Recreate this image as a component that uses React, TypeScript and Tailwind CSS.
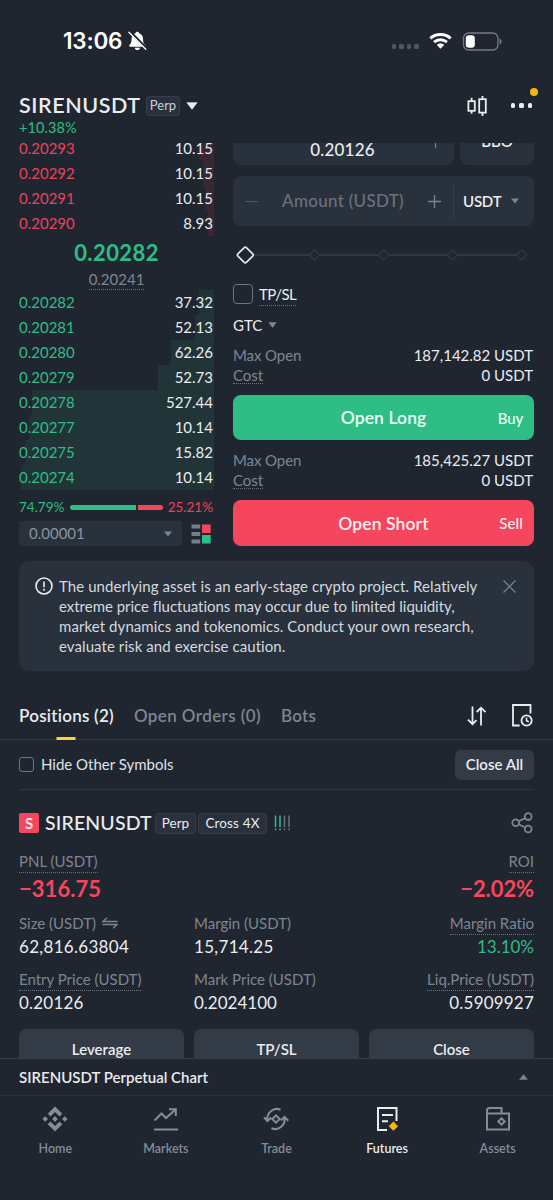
import type { ReactNode } from 'react'

const asks = [
    { price: '0.20293', amount: '10.15', depth: 15 },
    { price: '0.20292', amount: '10.15', depth: 11 },
    { price: '0.20291', amount: '10.15', depth: 9 },
    { price: '0.20290', amount: '8.93', depth: 6 },
]

const bids = [
    { price: '0.20282', amount: '37.32', depth: 15 },
    { price: '0.20281', amount: '52.13', depth: 19 },
    { price: '0.20280', amount: '62.26', depth: 43 },
    { price: '0.20279', amount: '52.73', depth: 56 },
    { price: '0.20278', amount: '527.44', depth: 182 },
    { price: '0.20277', amount: '10.14', depth: 185 },
    { price: '0.20275', amount: '15.82', depth: 189 },
    { price: '0.20274', amount: '10.14', depth: 193 },
]

function Caret({ className = '', up = false }: { className?: string; up?: boolean }) {
    return (
        <svg className={className} viewBox="0 0 10 7" fill="currentColor">
            <path d={up ? 'M5 0.6 9.6 6.4H0.4Z' : 'M0.6 0.6H9.4L5 6.4Z'} stroke="currentColor" strokeWidth="0.6" strokeLinejoin="round" />
        </svg>
    )
}

function Dotted({ children, className = '' }: { children: ReactNode; className?: string }) {
    return <span className={`border-b border-dotted border-[#6b7382] ${className}`}>{children}</span>
}

function BookRow({ row, side }: { row: { price: string; amount: string; depth: number }; side: 'ask' | 'bid' }) {
    return (
        <div className="relative flex h-[25px] items-center justify-between pr-px text-[15px]">
            <div
                className={`absolute inset-y-0 right-0 ${side === 'ask' ? 'bg-[#3a2733]' : 'bg-[#213538]'}`}
                style={{ width: row.depth }}
            />
            <span className={`relative ${side === 'ask' ? 'text-[#e8435b]' : 'text-[#2ebd85]'}`}>{row.price}</span>
            <span className="relative text-[#eaecef]">{row.amount}</span>
        </div>
    )
}

function StatusBar() {
    return (
        <div className="flex h-[82px] items-center justify-between pl-[63px] pr-[51px]">
            <div className="flex items-center gap-[6px]">
                <span className="font-['Inter',sans-serif] text-[22.5px] font-semibold leading-none tracking-[-0.2px] text-white">13:06</span>
                <svg className="h-[20px] w-[19px]" viewBox="0 0 19 20" fill="#fff">
                    <path d="M9.3 0.8c.9 0 1.6.6 1.7 1.4 2.6.7 4 2.8 4 5.6 0 4.2 1.2 5.2 2.2 6.3.6.7.2 1.700-.7 1.700H2.200c-1 0-1.400-1-.8-1.700 1-1.100 2.200-2.100 2.200-6.300 0-2.800 1.400-4.900 4-5.600.1-.8.8-1.400 1.700-1.400Z" />
                    <path d="M6.7 16.800h5.300c-.2 1.400-1.300 2.300-2.600 2.300s-2.500-.9-2.700-2.300Z" />
                    <path d="M1.500 0.500 18.800 18" stroke="#202630" strokeWidth="3.200" />
                    <path d="M0.900 1.300 17.800 18.300" stroke="#fff" strokeWidth="1.300" strokeLinecap="round" />
                </svg>
            </div>
            <div className="flex items-center">
                <div className="mr-[10px] mt-[11px] flex gap-[3px]">
                    {[0, 1, 2, 3].map((i) => (
                        <span key={i} className="h-[4.6px] w-[4.6px] rounded-[1.5px] bg-[#515761]" />
                    ))}
                </div>
                <svg className="mr-[10px] h-[18px] w-[23px]" viewBox="0 0 25 18" fill="none" stroke="#fff">
                    <path d="M1.500 6.100C7.600.7 17.400.7 23.500 6.100" strokeWidth="3.300" />
                    <path d="M5.500 10.200c4-3.400 10-3.400 14 0" strokeWidth="3.100" />
                    <path d="M8.500 13.300c2.200-2 5.800-2 8 0l-4 4.200Z" fill="#fff" stroke="none" />
                </svg>
                <svg className="h-[19px] w-[40px]" viewBox="0 0 40 19" fill="none">
                    <rect x="1.500" y="1" width="34.500" height="17" rx="5.200" stroke="#747983" strokeWidth="1.300" />
                    <rect x="3.800" y="3.300" width="9" height="12.400" rx="3.200" fill="#fff" />
                    <path d="M37.600 6.500c2.600.7 2.600 5.300 0 6Z" fill="#747983" />
                </svg>
            </div>
        </div>
    )
}

function Header() {
    return (
        <div className="h-[61px] px-[19px] text-[#eaecef]">
            <div className="flex h-[47px] items-center">
                <h1 className="w-[127px] text-[21.5px] font-semibold tracking-[0.55px]">SIRENUSDT</h1>
                <span className="flex h-[20px] w-[34px] items-center justify-center rounded-[3px] border border-[#363e4b] bg-[#29313d] text-[13px] text-[#c9ced6]">Perp</span>
                <Caret className="ml-[6px] h-[8px] w-[12px]" />
                <svg className="ml-auto h-[22px] w-[20px]" viewBox="0 0 20 22" fill="none" stroke="#eaecef" strokeWidth="1.8">
                    <rect x="1.400" y="6.200" width="6.400" height="9.600" />
                    <path d="M4.600 2.800v3.400M4.600 15.800v3" />
                    <rect x="12.200" y="4.200" width="6.600" height="13.400" />
                    <path d="M15.500 1v3.200M15.500 17.600V21" />
                </svg>
                <div className="relative ml-[24px] flex w-[23px] gap-[4px]">
                    {[0, 1, 2].map((i) => (
                        <span key={i} className="h-[4.4px] w-[4.4px] rounded-[1.5px] bg-[#eaecef]" />
                    ))}
                    <span className="absolute -top-[15px] left-[19px] h-[8px] w-[8px] rounded-full bg-[#f0b90b]" />
                </div>
            </div>
            <div className="-mt-[9px] text-[14.5px] leading-[16px] tracking-[0.1px] text-[#2ebd85]">+10.38%</div>
        </div>
    )
}

function OrderBook() {
    return (
        <div className="w-[195px]">
            {asks.map((row) => (
                <BookRow key={row.price} row={row} side="ask" />
            ))}
            <div className="flex h-[54px] flex-col items-center">
                <span className="mt-[4px] text-[22px] font-bold leading-[26px] tracking-[0.4px] text-[#2ebd85]">0.20282</span>
                <Dotted className="mt-[4px] h-[20px] text-[15px] leading-[18px] text-[#7d8593]">0.20241</Dotted>
            </div>
            {bids.map((row) => (
                <BookRow key={row.price} row={row} side="bid" />
            ))}
            <div className="mt-[8px] flex h-[18px] items-center justify-between pr-px text-[13.5px]">
                <span className="text-[#2ebd85]">74.79%</span>
                <div className="flex w-[93px] gap-[2px]">
                    <span className="h-[5px] w-[66px] rounded-l-full bg-[#2ebd85]" />
                    <span className="h-[5px] flex-1 rounded-r-full bg-[#f6465d]" />
                </div>
                <span className="text-[#e8435b]">25.21%</span>
            </div>
            <div className="mt-[5px] flex items-center">
                <div className="flex h-[25px] w-[163px] items-center justify-between rounded-[3px] bg-[#29313d] pl-[10px] pr-[10px] text-[15px] text-[#8c94a1]">
                    0.00001
                    <Caret className="h-[6px] w-[8px] text-[#7d8593]" />
                </div>
                <svg className="ml-[9px] h-[20px] w-[20px]" viewBox="0 0 20 20">
                    <g fill="#767e8c">
                        <rect x="0.500" y="0.500" width="8.700" height="4" />
                        <rect x="0.500" y="8" width="8.700" height="4" />
                        <rect x="0.500" y="15.500" width="8.700" height="4" />
                    </g>
                    <rect x="11" y="0.500" width="8.700" height="8.500" fill="#f6465d" />
                    <rect x="11" y="11" width="8.700" height="8.500" fill="#2ebd85" />
                </svg>
            </div>
        </div>
    )
}

function SizeSlider() {
    return (
        <svg className="mt-[17px] block h-[24px] w-[301px]" viewBox="0 0 301 24" fill="none" stroke="#2f3743" strokeWidth="1.8">
            <path d="M21 12H76M87 12h58M156 12h58M225 12h58" />
            {[81.5, 150.5, 219.5, 288.5].map((x) => (
                <rect key={x} x={x - 3.6} y={8.4} width="7.2" height="7.2" rx="1" strokeWidth="1.5" transform={`rotate(45 ${x} 12)`} />
            ))}
            <rect x="6.3" y="6" width="12" height="12" rx="1.5" stroke="#eaecef" strokeWidth="1.6" transform="rotate(45 12.3 12)" />
        </svg>
    )
}

function Limits({ max }: { max: string }) {
    return (
        <div className="pr-px text-[15px] leading-[20px]">
            <div className="flex justify-between">
                <span className="tracking-[-0.1px] text-[#7d8593]">Max Open</span>
                <span className="text-[#eaecef]">{max} USDT</span>
            </div>
            <div className="flex justify-between">
                <Dotted className="h-[19px] text-[#7d8593]">Cost</Dotted>
                <span className="text-[#eaecef]">0 USDT</span>
            </div>
        </div>
    )
}

function OrderForm() {
    return (
        <div className="w-[301px] text-[#eaecef]">
            <div className="-mt-[20px] flex gap-[6px]">
                <div className="flex h-[49px] w-[221px] items-center justify-between rounded-[8px] bg-[#29313d] px-[12px] text-[17px] font-medium">
                    <span className="w-[11px]" />
                    <span className="pt-[19px] tracking-[0.2px]">0.20126</span>
                    <svg className="mt-[2px] h-[13px] w-[13px]" viewBox="0 0 13 13" stroke="#7d8593" strokeWidth="1.2">
                        <path d="M6.5 0v13M0 6.5h13" />
                    </svg>
                </div>
                <div className="flex h-[49px] w-[74px] items-center justify-center rounded-[8px] bg-[#29313d] pt-[2px] text-[15px] font-semibold">BBO</div>
            </div>
            <div className="mt-[11px] flex h-[50px] items-center rounded-[8px] bg-[#29313d]">
                <span className="ml-[12px] h-px w-[13px] bg-[#4b5361]" />
                <span className="w-[170px] text-center text-[17px] font-medium tracking-[0.3px] text-[#69717f]">Amount (USDT)</span>
                <svg className="h-[13px] w-[13px]" viewBox="0 0 13 13" stroke="#7d8593" strokeWidth="1.3">
                    <path d="M6.5 0v13M0 6.5h13" />
                </svg>
                <span className="ml-[12px] h-[35px] w-px bg-[#363e4b]" />
                <span className="ml-[9px] text-[15px] font-semibold tracking-[-0.2px]">USDT</span>
                <Caret className="ml-[10px] h-[6px] w-[8px] text-[#7d8593]" />
            </div>
            <SizeSlider />
            <div className="mt-[17px] flex h-[20px] items-center">
                <span className="h-[20px] w-[20px] rounded-[4px] border-[1.5px] border-[#6b7382]" />
                <Dotted className="ml-[6px] mt-[2px] h-[21px] text-[15px] leading-[18px] tracking-[-0.5px]">TP/SL</Dotted>
            </div>
            <div className="mt-[11px] flex h-[20px] items-center text-[15px]">
                GTC
                <Caret className="ml-[6px] h-[6px] w-[9px] text-[#7d8593]" />
            </div>
            <div className="mt-[10px]">
                <Limits max="187,142.82" />
            </div>
            <button className="relative mt-[10px] block h-[45px] w-full rounded-[8px] bg-[#2ebd85] pt-[2px] text-[17.5px] font-semibold tracking-[0.1px] text-[#eafff5]">
                Open Long
                <span className="absolute right-[11px] top-[11px] text-[15px] font-medium leading-[24px] tracking-[-0.2px]">Buy</span>
            </button>
            <div className="mt-[10px]">
                <Limits max="185,425.27" />
            </div>
            <button className="relative mt-[10px] block h-[46px] w-full rounded-[8px] bg-[#f6465d] pt-[2px] text-[17.5px] font-semibold tracking-[0.1px] text-[#fff0f2]">
                Open Short
                <span className="absolute right-[11px] top-[11px] text-[15px] font-medium leading-[24px]">Sell</span>
            </button>
        </div>
    )
}

function RiskNotice() {
    return (
        <div className="mx-[19px] mt-[15px] flex h-[110px] rounded-[10px] bg-[#29313d] pl-[16px] pt-[15px] text-[15px] leading-[20px] text-[#d5d9df]">
            <svg className="mt-[1px] h-[18px] w-[18px] shrink-0" viewBox="0 0 18 18" fill="none" stroke="#eaecef" strokeWidth="1.6">
                <circle cx="9" cy="9" r="8" />
                <path d="M9 4.500v5.700M9 11.800v1.900" />
            </svg>
            <p className="ml-[6px] w-[430px] shrink-0 whitespace-nowrap tracking-[0.08px]">
                The underlying asset is an early-stage crypto project. Relatively
                <br />
                <span className="tracking-[-0.02px]">extreme price fluctuations may occur due to limited liquidity,</span>
                <br />
                market dynamics and tokenomics. Conduct your own research,
                <br />
                evaluate risk and exercise caution.
            </p>
            <svg className="ml-[14px] mt-[4px] h-[13px] w-[13px]" viewBox="0 0 13 13" stroke="#7d8593" strokeWidth="1.2">
                <path d="M0.500 0.500 12.500 12.500M12.500 0.500 0.500 12.500" />
            </svg>
        </div>
    )
}

function Tabs() {
    return (
        <div className="mt-[21px] flex h-[48px] items-center border-b border-[#2f3743] px-[19px] text-[17px] font-semibold tracking-[0.25px] text-[#7d8593]">
            <div className="relative flex h-full items-center text-[#eaecef]">
                Positions (2)
                <span className="absolute -bottom-px left-1/2 h-[3px] w-[19px] -translate-x-1/2 bg-[#fcd535]" />
            </div>
            <span className="ml-[20px] tracking-[0.4px]">Open Orders (0)</span>
            <span className="ml-[20px]">Bots</span>
            <svg className="ml-auto h-[20px] w-[20px]" viewBox="0 0 20 20" fill="none" stroke="#eaecef" strokeWidth="1.8">
                <path d="M5.500 0.500V18M1 13.700l4.500 4.500L9.500 14.200M14 19.500V2M9.700 6 14 1.700 18.500 6.200" />
            </svg>
            <svg className="ml-[24px] mr-[1px] h-[23px] w-[22px]" viewBox="0 0 22 23" fill="none" stroke="#eaecef" strokeWidth="1.8">
                <path d="M8.700 21.500H2V1h17.500v8.500" />
                <circle cx="15.600" cy="16.500" r="5.100" />
                <path d="M15.500 13.500v3.300l2.300 1" strokeWidth="1.5" />
            </svg>
        </div>
    )
}

function Stat({ label, value, dotted = false, right = false, valueClass = 'text-[#eaecef]', icon }: {
    label: string
    value: string
    dotted?: boolean
    right?: boolean
    valueClass?: string
    icon?: ReactNode
}) {
    return (
        <div className={`flex flex-col ${right ? 'items-end' : 'items-start'}`}>
            <div className="flex h-[23px] items-start text-[15px] leading-[22px] text-[#7d8593]">
                {dotted ? <Dotted className="h-[23px]">{label}</Dotted> : label}
                {icon}
            </div>
            <div className={`text-[17px] leading-[24px] ${valueClass}`}>{value}</div>
        </div>
    )
}

function Position() {
    return (
        <div className="mx-[19px]">
            <div className="flex h-[50px] items-center justify-between border-b border-[#2f3743]">
                <label className="flex items-center pb-px text-[15px] text-[#dfe2e7]">
                    <span className="mr-[7px] h-[15px] w-[15px] rounded-[3px] border-[1.5px] border-[#6b7382]" />
                    Hide Other Symbols
                </label>
                <button className="h-[30px] w-[79px] rounded-[6px] bg-[#333b47] text-[15px] font-semibold text-[#eaecef]">Close All</button>
            </div>
            <div className="mt-[22px] flex h-[22px] items-center text-[#eaecef]">
                <span className="flex h-[20px] w-[20px] items-center justify-center rounded-[2px] bg-[#f6465d] text-[15px] font-bold">S</span>
                <span className="ml-[6px] w-[109px] text-[19.5px] font-medium tracking-[0.15px]">SIRENUSDT</span>
                <span className="ml-[1px] flex h-[21px] w-[41px] items-center justify-center rounded-[3px] border border-[#343c49] bg-[#29313d] text-[13.5px]">Perp</span>
                <span className="ml-[2px] flex h-[21px] w-[69px] items-center justify-center rounded-[3px] border border-[#343c49] bg-[#29313d] text-[13.5px] tracking-[0.15px]">Cross 4X</span>
                <svg className="ml-[7px] h-[16px] w-[17px]" viewBox="0 0 17 16" strokeWidth="1.5">
                    <path d="M1.500 0.500v11.500M1.500 13.500v1.800M6 0.500v11.500M6 13.500v1.800" stroke="#2ebd85" />
                    <path d="M10.500 0.500v11.500M10.500 13.500v1.800M15 0.500v11.500M15 13.500v1.800" stroke="#69717f" />
                </svg>
                <svg className="ml-auto mr-[1px] h-[22px] w-[22px]" viewBox="0 0 22 22" fill="none" stroke="#7d8593" strokeWidth="1.8">
                    <circle cx="4.700" cy="10.800" r="3.400" />
                    <circle cx="17.200" cy="4.600" r="3.400" />
                    <circle cx="17.200" cy="17" r="3.400" />
                    <path d="M7.700 9.300l6.400-3.200M7.700 12.300l6.400 3.200" />
                </svg>
            </div>
            <div className="mt-[16px] flex justify-between">
                <Stat label="PNL (USDT)" value="−316.75" dotted valueClass="text-[22px] font-bold pt-[4px] -mb-px tracking-[0.05px] text-[#f6465d]" />
                <Stat label="ROI" value="−2.02%" dotted right valueClass="text-[22px] font-bold pt-[4px] -mb-px tracking-[-0.1px] text-[#f6465d]" />
            </div>
            <div className="mt-[12px] grid grid-cols-[175px_1fr_1fr] gap-y-[9px]">
                <Stat
                    label="Size (USDT)"
                    value="62,816.63804"
                    valueClass="text-[#eaecef] tracking-[0.3px]"
                    icon={
                        <svg className="ml-[6px] mt-[5px] h-[12px] w-[16px]" viewBox="0 0 16 12" fill="none" stroke="#7d8593" strokeWidth="1.3">
                            <path d="M5 0.700 1 4.500H15.500M11 11.300l4-3.800H0.500" />
                        </svg>
                    }
                />
                <Stat label="Margin (USDT)" value="15,714.25" valueClass="text-[#eaecef] tracking-[0.3px]" />
                <Stat label="Margin Ratio" value="13.10%" dotted right valueClass="text-[#2ebd85]" />
                <Stat label="Entry Price (USDT)" value="0.20126" dotted valueClass="text-[#eaecef] tracking-[0.2px]" />
                <Stat label="Mark Price (USDT)" value="0.2024100" />
                <Stat label="Liq.Price (USDT)" value="0.5909927" dotted right valueClass="text-[#eaecef] tracking-[0.2px]" />
            </div>
            <div className="mt-[14px] grid grid-cols-3 gap-[10px]">
                {['Leverage', 'TP/SL', 'Close'].map((label) => (
                    <button key={label} className="h-[40px] rounded-[7px] bg-[#333b47] text-[15px] font-semibold text-[#eaecef]">
                        {label}
                    </button>
                ))}
            </div>
        </div>
    )
}

const navItems: { label: string; active?: boolean; icon: ReactNode }[] = [
    {
        label: 'Home',
        icon: (
            <g fill="currentColor" stroke="none">
                <path d="M13 0.500 20.300 7.700 17.500 10.500 13 6 8.500 10.500 5.700 7.700Z" />
                <path d="M13 25.500 20.300 18.300 17.500 15.500 13 20 8.500 15.500 5.700 18.300Z" />
                <path d="M13 10.100 15.900 13 13 15.900 10.100 13ZM3.200 10.200 6 13 3.200 15.800 0.400 13ZM22.800 10.200 25.600 13 22.800 15.800 20 13Z" />
            </g>
        ),
    },
    {
        label: 'Markets',
        icon: <path d="M1.500 14.500 8.500 7.500 13 12 22.500 3.500M16 3.200h6.800V10M1 23.500h24" />,
    },
    {
        label: 'Trade',
        icon: (
            <>
                <path d="M4.400 14.500C3.500 7 10 .7 17.600 3.700M1 11.300l3.400 3.700L8.300 11.500M21.600 11.500C22.500 19 16 25.300 8.400 22.300M25.300 14.700 21.600 11 17.900 14.500" />
                <path d="M13 9.300 16.700 13 13 16.700 9.300 13Z" />
            </>
        ),
    },
    {
        label: 'Futures',
        active: true,
        icon: (
            <>
                <path d="M13 24H4V2h18.500v13M8 9h11M8 15.300h6" />
                <path d="M19.400 15.800 23.800 20.200 19.400 24.600 15 20.200Z" fill="#f0b90b" stroke="#f0b90b" strokeWidth="0.5" />
            </>
        ),
    },
    {
        label: 'Assets',
        icon: (
            <>
                <path d="M2 7.500V23.500H24V7.500ZM2 8.500V4.500q0-2.500 2.500-2.500H16.500V7.500" />
                <path d="M16.500 12.300 19.700 15.500 16.500 18.700 13.300 15.500Z" />
            </>
        ),
    },
]

function BottomNav() {
    return (
        <nav className="flex h-[105px] border-t border-[#2b323e] pt-[10px]">
            {navItems.map((item) => (
                <div key={item.label} className={`flex flex-1 flex-col items-center ${item.active ? 'text-[#eaecef]' : 'text-[#848c99]'}`}>
                    <svg className="h-[26px] w-[26px]" viewBox="0 0 26 26" fill="none" stroke="currentColor" strokeWidth="2">
                        {item.icon}
                    </svg>
                    <span className="mt-[8px] text-[12.5px] font-semibold leading-[18px]">{item.label}</span>
                </div>
            ))}
        </nav>
    )
}

export default function App() {
    return (
        <div className="flex h-[1200px] w-[553px] flex-col overflow-hidden bg-[#202630] font-['Lato','Open_Sans',sans-serif] [font-variant-ligatures:none]">
            <StatusBar />
            <Header />
            <main className="h-[915px] overflow-hidden">
                <div className="-mt-[7px] flex justify-between px-[19px]">
                    <OrderBook />
                    <OrderForm />
                </div>
                <RiskNotice />
                <Tabs />
                <Position />
            </main>
            <div className="flex h-[37px] items-center justify-between border-t border-[#363e4a] pl-[19px] pr-[25px] text-[15px] font-semibold text-[#eaecef]">
                SIRENUSDT Perpetual Chart
                <Caret up className="h-[6px] w-[9px] text-[#7d8593]" />
            </div>
            <BottomNav />
        </div>
    )
}
